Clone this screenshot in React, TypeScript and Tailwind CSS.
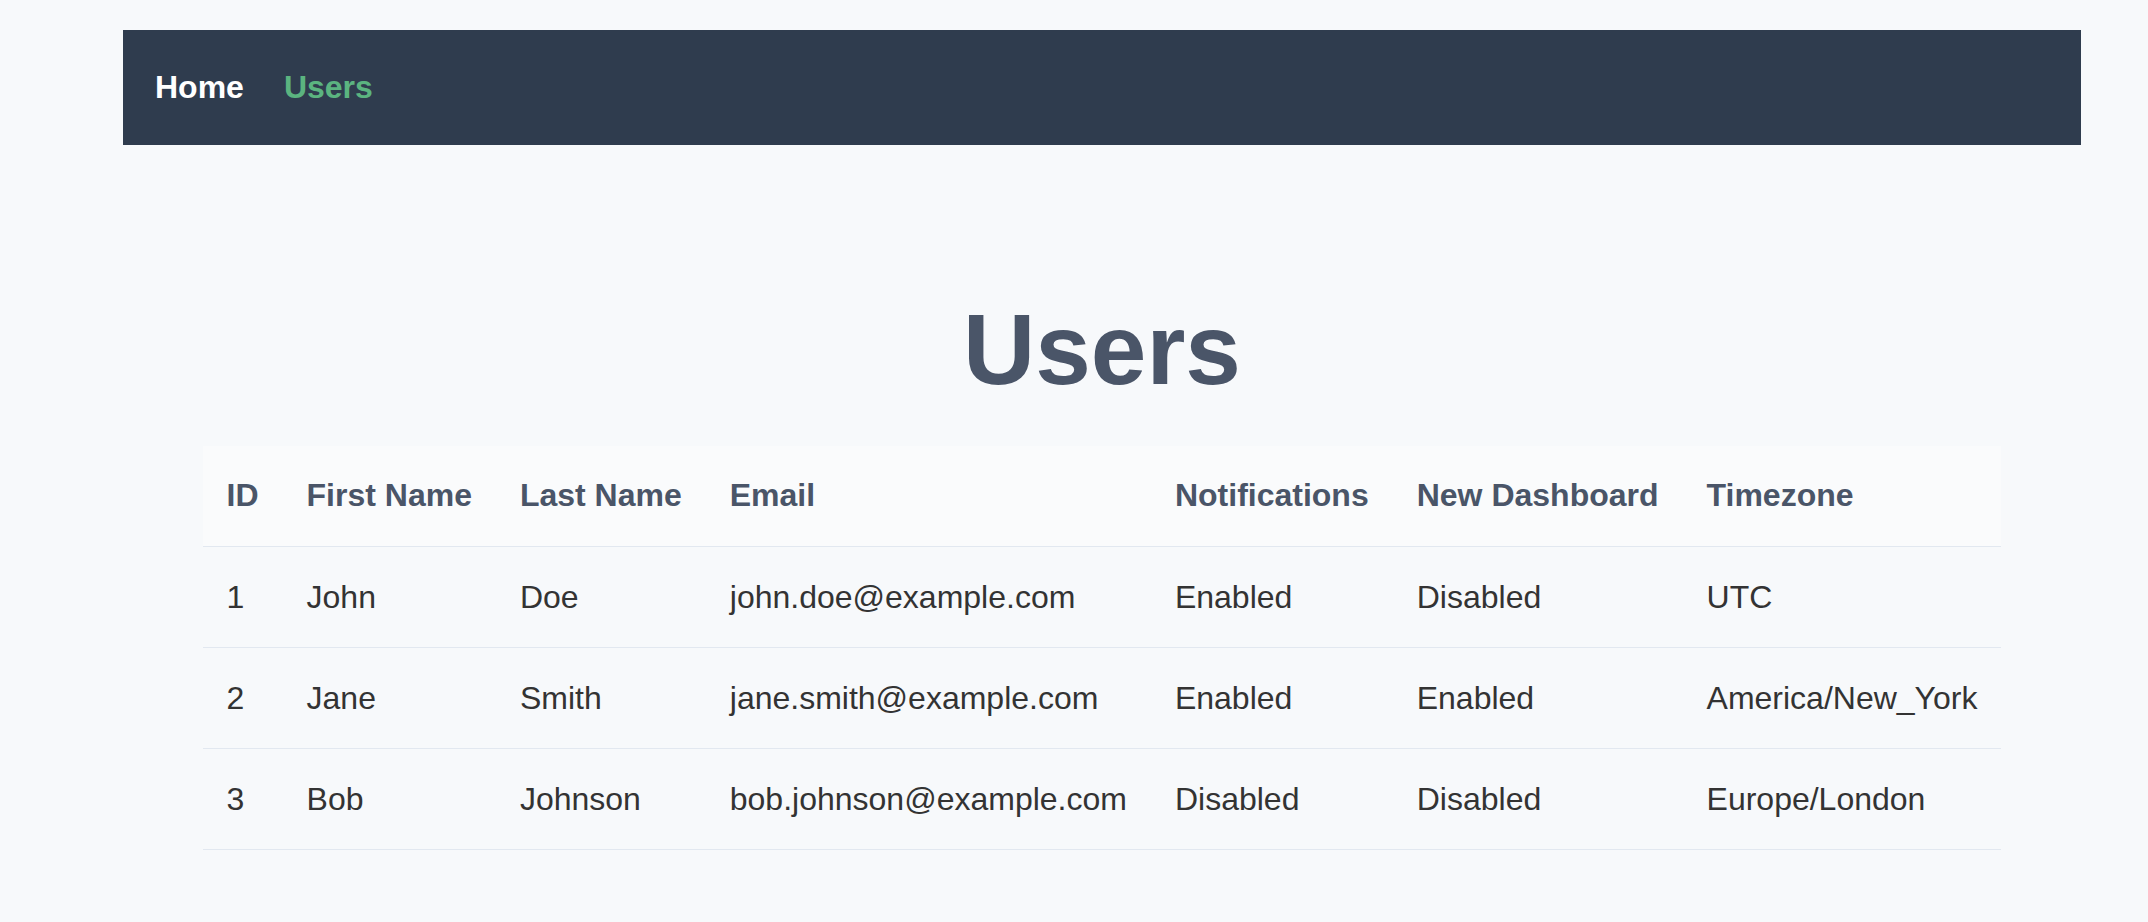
import React from "react";

const users = [
  { id: 1, first: "John", last: "Doe", email: "john.doe@example.com", notif: "Enabled", dash: "Disabled", tz: "UTC" },
  { id: 2, first: "Jane", last: "Smith", email: "jane.smith@example.com", notif: "Enabled", dash: "Enabled", tz: "America/New_York" },
  { id: 3, first: "Bob", last: "Johnson", email: "bob.johnson@example.com", notif: "Disabled", dash: "Disabled", tz: "Europe/London" },
];

const headers = ["ID", "First Name", "Last Name", "Email", "Notifications", "New Dashboard", "Timezone"];

export default function App() {
  return (
    <div
      className="min-h-[922px] w-full bg-[#f7f9fb] pt-[30px]"
      style={{ fontFamily: '"Liberation Sans", Arial, Helvetica, sans-serif' }}
    >
      <div className="ml-[123px] w-[1958px]">
        <nav className="flex h-[115px] items-center gap-[40px] bg-[#2f3c4e] pb-[2px] pl-[32px] text-[32px] font-bold leading-[48px]">
          <a className="text-white">Home</a>
          <a className="text-[#5bb480]">Users</a>
        </nav>
        <h1 className="mt-[154px] text-center text-[100px] font-bold leading-[100px] text-[#4a5568]">Users</h1>
        <div className="mt-[47px] flex justify-center">
          <table className="border-collapse text-left text-[32px] leading-[48px]">
            <thead>
              <tr className="border-b border-[#e2e8f0] bg-[#fafbfc]">
                {headers.map((h) => (
                  <th key={h} className="whitespace-nowrap px-[24px] pb-[27px] pt-[25px] font-bold text-[#4a5568]">
                    {h}
                  </th>
                ))}
              </tr>
            </thead>
            <tbody>
              {users.map((u) => (
                <tr key={u.id} className="border-b border-[#e2e8f0] text-[#333333]">
                  <td className="whitespace-nowrap px-[24px] py-[26px]">{u.id}</td>
                  <td className="whitespace-nowrap px-[24px] py-[26px]">{u.first}</td>
                  <td className="whitespace-nowrap px-[24px] py-[26px]">{u.last}</td>
                  <td className="whitespace-nowrap px-[24px] py-[26px]">{u.email}</td>
                  <td className="whitespace-nowrap px-[24px] py-[26px]">{u.notif}</td>
                  <td className="whitespace-nowrap px-[24px] py-[26px]">{u.dash}</td>
                  <td className="whitespace-nowrap px-[24px] py-[26px]">{u.tz}</td>
                </tr>
              ))}
            </tbody>
          </table>
        </div>
      </div>
    </div>
  );
}
